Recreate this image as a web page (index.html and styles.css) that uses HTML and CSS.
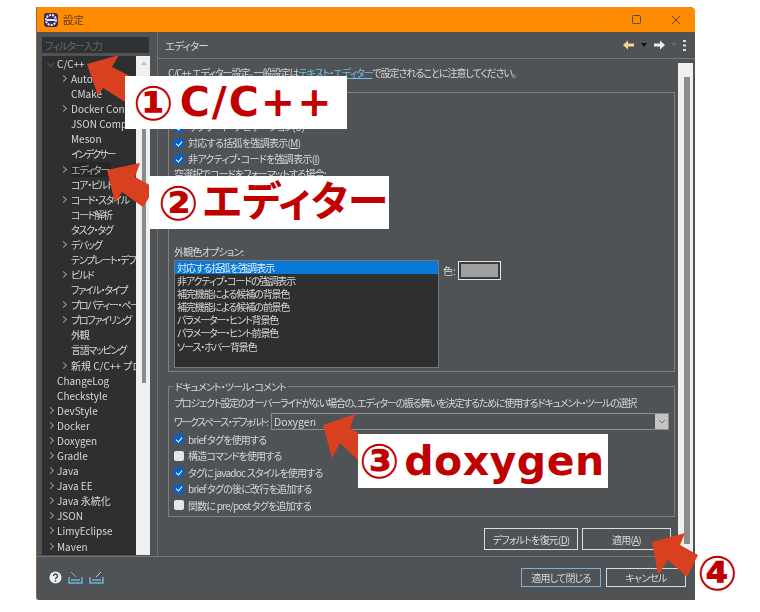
FILE: index.html
```html
<!DOCTYPE html>
<html lang="ja">
<head>
  <meta charset="UTF-8" />
  <title>設定</title>
  <link rel="stylesheet" href="styles.css">
</head>
<body>
<div class="stage">
  <div class="window">
    <div class="titlebar">
      <svg class="app-icon" width="16" height="16" viewBox="0 0 16 16">
        <rect x="1" y="1" width="14" height="14" rx="3" fill="#3b2a66"/>
        <circle cx="8" cy="8" r="5" fill="none" stroke="#e8e8f0" stroke-width="2" stroke-dasharray="2 1"/>
        <rect x="4" y="7" width="8" height="2" fill="#e8e8f0"/>
      </svg>
      <span class="title">設定</span>
      <div class="win-controls">
        <svg width="12" height="12" viewBox="0 0 12 12"><path d="M1 6h10" stroke="#e08a20" stroke-width="1"/></svg>
        <svg width="12" height="12" viewBox="0 0 12 12"><rect x="1.5" y="1.5" width="8" height="8" rx="1" fill="none" stroke="#5a4a30" stroke-width="1"/></svg>
        <svg width="12" height="12" viewBox="0 0 12 12"><path d="M2 2l8 8M10 2l-8 8" stroke="#5a4a30" stroke-width="1"/></svg>
      </div>
    </div>

    <div class="main">
      <div class="sidebar">
        <input class="filter" type="text" placeholder="フィルター入力" />
        <div class="tree-wrap">
          <ul class="tree">
            <li class="top open">C/C++</li>
            <li class="child more">Automatic</li>
            <li class="child">CMake</li>
            <li class="child more">Docker Container</li>
            <li class="child">JSON Compilation</li>
            <li class="child">Meson</li>
            <li class="child ja tight">インデクサー</li>
            <li class="child ja more"><span class="sel">エディター</span></li>
            <li class="child ja">コア・ビルド</li>
            <li class="child ja more">コード・スタイル</li>
            <li class="child ja">コード解析</li>
            <li class="child ja">タスク・タグ</li>
            <li class="child ja more">デバッグ</li>
            <li class="child ja">テンプレート・デフォルト</li>
            <li class="child ja more">ビルド</li>
            <li class="child ja">ファイル・タイプ</li>
            <li class="child ja more">プロパティー・ページ</li>
            <li class="child ja more">プロファイリング</li>
            <li class="child ja">外観</li>
            <li class="child ja">言語マッピング</li>
            <li class="child more">新規 C/C++ プロジェクト</li>
            <li class="top">ChangeLog</li>
            <li class="top">Checkstyle</li>
            <li class="top more">DevStyle</li>
            <li class="top more">Docker</li>
            <li class="top more">Doxygen</li>
            <li class="top more">Gradle</li>
            <li class="top more">Java</li>
            <li class="top more">Java EE</li>
            <li class="top more">Java 永続化</li>
            <li class="top more">JSON</li>
            <li class="top more">LimyEclipse</li>
            <li class="top more">Maven</li>
          </ul>
          <div class="tree-scroll">
            <svg class="scroll-up" width="6" height="4" viewBox="0 0 6 4"><path d="M0 4l3-4 3 4z" fill="#c4c4c4"/></svg>
            <div class="tree-thumb"></div>
          </div>
        </div>
      </div>

      <div class="content">
        <div class="page-head">
          <span class="page-title">エディター</span>
          <div class="nav-tools">
            <svg width="12" height="10" viewBox="0 0 12 10"><path d="M0 5l5-4.500v3h6v3H5v3z" fill="#f6d88a"/></svg>
            <svg width="6" height="4" viewBox="0 0 6 4"><path d="M0 0h6L3 4z" fill="#111"/></svg>
            <svg width="12" height="10" viewBox="0 0 12 10"><path d="M12 5L7 .5v3H1v3h6v3z" fill="#eee"/></svg>
            <svg width="6" height="4" viewBox="0 0 6 4"><path d="M0 0h6L3 4z" fill="#666"/></svg>
            <svg width="3" height="11" viewBox="0 0 3 11"><path d="M0 0h3v2H0zM0 4.500h3v2H0zM0 9h3v2H0z" fill="#ddd"/></svg>
          </div>
        </div>

        <div class="page-body">
          <div class="pref">
            <p class="intro">C/C++ エディター設定。一般設定は<a class="link">テキスト・エディター</a>で設定されることに注意してください。</p>

            <div class="group top-group">
              <div class="check-row"><span class="cb"></span>スマート・キャレット位置を使用</div>
              <div class="check-row"><span class="cb on"></span>サブワード・ナビゲーション(U)</div>
              <div class="check-row"><span class="cb on"></span>対応する括弧を強調表示(<u>M</u>)</div>
              <div class="check-row"><span class="cb on"></span>非アクティブ・コードを強調表示(<u>I</u>)</div>
              <div class="plain-row">空選択でコードをフォーマットする場合:</div>
              <div class="color-head">外観色オプション:</div>
              <div class="color-row">
                <ul class="color-list">
                  <li class="picked">対応する括弧を強調表示</li>
                  <li>非アクティブ・コードの強調表示</li>
                  <li>補完機能による候補の背景色</li>
                  <li>補完機能による候補の前景色</li>
                  <li>パラメーター・ヒント背景色</li>
                  <li>パラメーター・ヒント前景色</li>
                  <li>ソース・ホバー背景色</li>
                </ul>
                <span class="color-label">色:</span>
                <span class="swatch"><span class="swatch-fill"></span></span>
              </div>
            </div>

            <div class="group doc-group">
              <span class="legend">ドキュメント・ツール・コメント</span>
              <p class="doc-desc">プロジェクト設定のオーバーライドがない場合の、エディターの振る舞いを決定するために使用するドキュメント・ツールの選択</p>
              <div class="combo-row">
                <span class="combo-label">ワークスペース・デフォルト:</span>
                <div class="combo">Doxygen
                  <span class="combo-btn"><svg width="8" height="5" viewBox="0 0 8 5"><path d="M1 1l3 3 3-3" fill="none" stroke="#777" stroke-width="1"/></svg></span>
                </div>
              </div>
              <div class="doc-check"><span class="cb on"></span>brief タグを使用する</div>
              <div class="doc-check"><span class="cb"></span>構造コマンドを使用する</div>
              <div class="doc-check"><span class="cb on"></span>タグに javadoc スタイルを使用する</div>
              <div class="doc-check"><span class="cb on"></span>brief タグの後に改行を追加する</div>
              <div class="doc-check"><span class="cb"></span>関数に pre/post タグを追加する</div>
            </div>

            <div class="page-buttons">
              <button class="btn restore">デフォルトを復元(<u>D</u>)</button>
              <button class="btn apply">適用(<u>A</u>)</button>
            </div>
          </div>
          <div class="page-scroll"><div class="page-thumb"></div></div>
        </div>
      </div>
    </div>

    <div class="footer">
      <div class="foot-icons">
        <svg width="13" height="13" viewBox="0 0 13 13"><circle cx="6.500" cy="6.500" r="6" fill="#eee"/><path d="M4.500 5a2 2 0 1 1 3 1.700c-.7.4-1 .8-1 1.500" fill="none" stroke="#444" stroke-width="1.400"/><rect x="5.800" y="9.200" width="1.400" height="1.400" fill="#444"/></svg>
        <svg width="15" height="13" viewBox="0 0 15 13"><path d="M1 6v6h13V6" fill="none" stroke="#6fb2d8" stroke-width="1.500"/><path d="M3 9h9" stroke="#6fb2d8" stroke-width="1.500"/><path d="M3 1l5 5" stroke="#9ab" stroke-width="1"/></svg>
        <svg width="15" height="13" viewBox="0 0 15 13"><path d="M1 6v6h13V6" fill="none" stroke="#6fb2d8" stroke-width="1.500"/><path d="M3 9h9" stroke="#6fb2d8" stroke-width="1.500"/><path d="M7 6l5-5" stroke="#ccd" stroke-width="1"/></svg>
      </div>
      <div class="foot-buttons">
        <button class="btn primary">適用して閉じる</button>
        <button class="btn cancel">キャンセル</button>
      </div>
    </div>
  </div>

  <svg class="arrows" width="760" height="612" viewBox="0 0 760 612">
    <path d="M87 64L119 55 112 67 134 78 125 102 103 88 98 96z"/>
    <path d="M107 170L140 163 135 177 155 188 143 207 122 192 115 203z"/>
    <path d="M323 425L355 414 350 428 367 438 358 460 340 443 332 458z"/>
    <path d="M652 542L685 533 680 545 698 555 687 577 668 560 658 575z"/>
  </svg>
  <div class="note note-1"><span class="num">①</span>C/C++</div>
  <div class="note note-2"><span class="num">②</span>エディター</div>
  <div class="note note-3"><span class="num">③</span>doxygen</div>
  <div class="note note-4"><span class="num">④</span></div>
</div>
</body>
</html>
```

FILE: styles.css
```css
* {
  box-sizing: border-box;
}
html, body {
  margin: 0;
  padding: 0;
  background: #fff;
}
body {
  font-family: "Noto Sans CJK JP", "Noto Sans", sans-serif;
  font-size: 10px;
  font-feature-settings: "palt";
  color: #d6d8d8;
}
ul {
  list-style: none;
  margin: 0;
  padding: 0;
}
p {
  margin: 0;
}

.stage {
  position: relative;
  width: 760px;
  height: 612px;
  overflow: hidden;
  padding: 7px 0 0 36px;
}
.window {
  width: 659px;
  height: 593px;
  display: flex;
  flex-direction: column;
  background: #4f5356;
  border-radius: 0 5px 0 3px;
  overflow: hidden;
  border-left: 1px solid #8a6a45;
  filter: blur(0.3px);
}

/* title bar */
.titlebar {
  height: 25px;
  flex: none;
  display: flex;
  align-items: center;
  padding-left: 6px;
  background: #ff8c00;
  color: #5a4020;
}
.title {
  margin-left: 4px;
  font-size: 10.500px;
}
.win-controls {
  margin-left: auto;
  display: flex;
  gap: 27px;
  padding-right: 13px;
}

.main {
  height: 524px;
  flex: none;
  display: flex;
  min-height: 0;
}

/* left side */
.sidebar {
  width: 121px;
  flex: none;
  padding: 5px 7px 0 5px;
  border-right: 1px solid #6d7174;
}
.filter {
  display: block;
  width: 107px;
  height: 16px;
  border: none;
  padding: 0 3px;
  background: #2f3133;
  font: inherit;
  letter-spacing: -1px;
  color: #ddd;
}
.filter::placeholder {
  color: #66696b;
}
.tree-wrap {
  display: flex;
  height: 499px;
  margin-top: 3px;
  overflow: hidden;
}
.tree {
  width: 94px;
  flex: none;
  background: #2f2f2f;
  overflow: hidden;
  line-height: 15.090px;
  white-space: nowrap;
}
.tree li {
  position: relative;
  height: 15.090px;
}
.tree .ja {
  letter-spacing: -1.300px;
}
.tree .tight {
  letter-spacing: -2px;
}
.tree .top {
  padding-left: 15px;
}
.tree .child {
  padding-left: 29px;
}
.tree .more::before {
  content: "";
  position: absolute;
  top: 5px;
  width: 4px;
  height: 4px;
  border-top: 1px solid #9a9a9a;
  border-right: 1px solid #9a9a9a;
  transform: rotate(45deg);
}
.tree .top.more::before {
  left: 6px;
}
.tree .child.more::before {
  left: 19px;
}
.tree .open::before {
  content: "";
  position: absolute;
  left: 6px;
  top: 5px;
  width: 4px;
  height: 4px;
  border-bottom: 1px solid #555;
  border-right: 1px solid #555;
  transform: rotate(45deg);
}
.sel {
  display: inline-block;
  background: #262626;
  color: #b5b5b5;
  padding-right: 2px;
}
.tree-scroll {
  width: 14px;
  flex: none;
  background: #f0f0f0;
  padding: 5px 4px 0 6px;
}
.scroll-up {
  display: block;
  margin: 0 0 31px -1px;
}
.tree-thumb {
  height: 287px;
  background: #8b8b8b;
}

/* right side */
.content {
  flex: 1;
  display: flex;
  flex-direction: column;
  min-width: 0;
}
.page-head {
  height: 27px;
  flex: none;
  display: flex;
  align-items: center;
  justify-content: space-between;
  padding: 0 9px 0 7px;
  border-bottom: 1px solid #73777a;
}
.page-title {
  font-size: 10.500px;
  letter-spacing: -0.800px;
}
.nav-tools {
  display: flex;
  align-items: center;
  gap: 6px;
}
.page-body {
  height: 497px;
  flex: none;
  display: flex;
  padding-left: 10px;
  padding-right: 3px;
  padding-top: 4px;
}
.pref {
  width: 507px;
  flex: none;
}
.intro {
  height: 29px;
  line-height: 20px;
  letter-spacing: -1px;
}
.link {
  color: #6fc0e8;
  text-decoration: underline;
}
.group {
  border: 1px solid #7d8184;
  padding-left: 5px;
}
.top-group {
  height: 280px;
  padding-top: 10px;
}
.check-row {
  height: 16px;
  line-height: 16px;
  display: flex;
  align-items: center;
  letter-spacing: -0.700px;
}
.plain-row {
  height: 15px;
  line-height: 13px;
  letter-spacing: -0.800px;
}
.cb {
  position: relative;
  width: 10px;
  height: 10px;
  flex: none;
  margin-right: 4px;
  border-radius: 2px;
  background: #e6e6e6;
}
.cb.on {
  background: #0a5fc4;
}
.cb.on::after {
  content: "";
  position: absolute;
  left: 3px;
  top: 1.500px;
  width: 3px;
  height: 5px;
  border-right: 1.500px solid #fff;
  border-bottom: 1.500px solid #fff;
  transform: rotate(40deg);
}
.color-head {
  margin-top: 62px;
  height: 16px;
  line-height: 15px;
  letter-spacing: -0.800px;
}
.color-row {
  display: flex;
  align-items: flex-start;
}
.color-list {
  width: 265px;
  height: 108px;
  background: #2f2f2f;
  border: 1px solid #73777a;
  line-height: 13.100px;
  letter-spacing: -1.100px;
}
.color-list li {
  height: 13.100px;
  padding-left: 2px;
}
.color-list .picked {
  background: #0a78d7;
  color: #e8f2fa;
  letter-spacing: -0.900px;
}
.color-label {
  margin: 4px 0 0 4px;
  line-height: 13px;
  width: 15px;
}
.swatch {
  width: 43px;
  height: 19px;
  margin-top: 1px;
  padding: 2px;
  border: 1px solid #e4e4e4;
  background: #3a3c3e;
}
.swatch-fill {
  display: block;
  height: 100%;
  background: #a0a0a0;
}

.doc-group {
  position: relative;
  height: 131px;
  margin-top: 14px;
  padding-top: 9px;
}
.legend {
  position: absolute;
  left: 4px;
  top: -7px;
  padding: 0 2px;
  line-height: 13px;
  letter-spacing: -0.900px;
  background: #4f5356;
}
.doc-desc {
  line-height: 14px;
  white-space: nowrap;
  letter-spacing: -1.200px;
}
.combo-row {
  display: flex;
  align-items: center;
  height: 17px;
  margin-top: 3px;
  margin-bottom: 1px;
}
.combo-label {
  white-space: nowrap;
  letter-spacing: -1.500px;
}
.combo {
  position: relative;
  width: 398px;
  height: 17px;
  margin-left: auto;
  margin-right: 5px;
  border: 1px solid #8b8f92;
  line-height: 15px;
  padding-left: 2px;
  font-size: 10.500px;
}
.combo-btn {
  position: absolute;
  right: 0;
  top: 0;
  width: 13px;
  height: 15px;
  background: #c4c4c4;
  display: flex;
  align-items: center;
  justify-content: center;
}
.doc-check {
  height: 16.500px;
  display: flex;
  align-items: center;
  letter-spacing: -0.800px;
}

.page-buttons {
  display: flex;
  justify-content: flex-end;
  gap: 4px;
  margin-top: 11px;
  padding-right: 4px;
}
.btn {
  height: 22px;
  border: 1px solid #dcdcdc;
  background: #4f5356;
  padding: 0;
  font: inherit;
  letter-spacing: -0.800px;
  color: #d6d8d8;
}
.restore {
  width: 94px;
}
.apply {
  width: 89px;
}
.page-scroll {
  width: 15px;
  flex: none;
  margin-left: 3px;
  background: #f0f0f0;
  padding: 14px 3px 12px 6px;
}
.page-thumb {
  height: 100%;
  background: #8b8b8b;
}

/* bottom bar */
.footer {
  flex: 1;
  display: flex;
  align-items: center;
  justify-content: space-between;
  padding: 0 9px 2px 12px;
  border-top: 1px solid #73777a;
}
.foot-icons {
  display: flex;
  align-items: center;
  gap: 6px;
}
.foot-buttons {
  display: flex;
  gap: 5px;
}
.foot-buttons .btn {
  width: 80px;
  height: 19px;
  line-height: 16px;
}
.primary {
  border-color: #7fb0d8;
}

/* callouts laid over the screenshot */
.arrows {
  position: absolute;
  left: 0;
  top: 0;
}
.arrows path {
  fill: #d9401f;
}
.note {
  position: absolute;
  display: flex;
  align-items: center;
  background: #fff;
  color: #c00000;
  font-family: "DejaVu Sans", "Noto Sans CJK JP", sans-serif;
  font-weight: 700;
  font-size: 41px;
  line-height: 1;
  white-space: nowrap;
}
.num {
  font-size: 48px;
  margin-right: 4px;
}
.note-1 {
  left: 125px;
  top: 76px;
  width: 222px;
  height: 53px;
  padding-left: 8px;
  letter-spacing: 2px;
}
.note-2 {
  left: 149px;
  top: 176px;
  width: 240px;
  height: 53px;
  padding-left: 9px;
}
.note-3 {
  left: 358px;
  top: 434px;
  width: 250px;
  height: 54px;
  padding-left: 1px;
  letter-spacing: 0.500px;
}
.note-4 {
  left: 697px;
  top: 550px;
  width: 46px;
  height: 46px;
  background: none;
}
```
